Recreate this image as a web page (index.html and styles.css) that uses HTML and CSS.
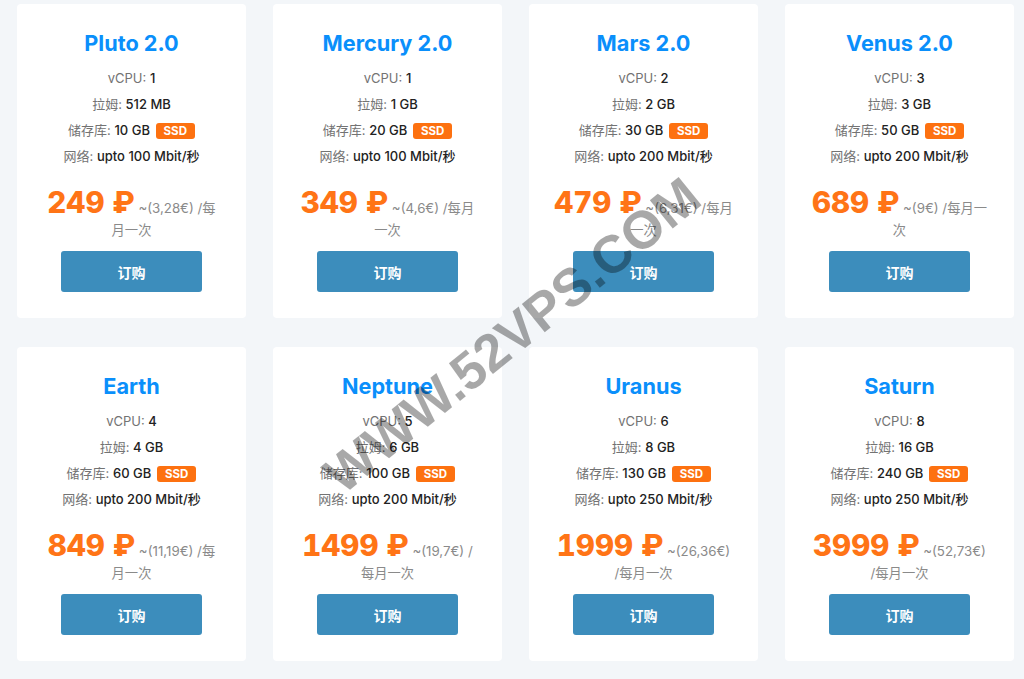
FILE: index.html
```html
<!DOCTYPE html>
<html lang="zh">
<head>
<meta charset="utf-8">
<title>VPS Plans</title>
<link rel="stylesheet" href="styles.css">
</head>
<body>
<main class="plans">
  <section class="card">
    <h2 class="title">Pluto 2.0</h2>
    <ul class="specs">
      <li><span class="lbl">vCPU:</span> <span class="val">1</span></li>
      <li><span class="lbl">拉姆:</span> <span class="val">512 MB</span></li>
      <li><span class="lbl">储存库:</span> <span class="val">10 GB</span> <span class="badge">SSD</span></li>
      <li><span class="lbl">网络:</span> <span class="val">upto 100 Mbit/秒</span></li>
    </ul>
    <p class="price"><span class="amount">249 ₽</span> <span class="unit">~(3,28€) /每月一次</span></p>
    <button class="buy">订购</button>
  </section>
  <section class="card">
    <h2 class="title">Mercury 2.0</h2>
    <ul class="specs">
      <li><span class="lbl">vCPU:</span> <span class="val">1</span></li>
      <li><span class="lbl">拉姆:</span> <span class="val">1 GB</span></li>
      <li><span class="lbl">储存库:</span> <span class="val">20 GB</span> <span class="badge">SSD</span></li>
      <li><span class="lbl">网络:</span> <span class="val">upto 100 Mbit/秒</span></li>
    </ul>
    <p class="price"><span class="amount">349 ₽</span> <span class="unit">~(4,6€) /每月一次</span></p>
    <button class="buy">订购</button>
  </section>
  <section class="card">
    <h2 class="title">Mars 2.0</h2>
    <ul class="specs">
      <li><span class="lbl">vCPU:</span> <span class="val">2</span></li>
      <li><span class="lbl">拉姆:</span> <span class="val">2 GB</span></li>
      <li><span class="lbl">储存库:</span> <span class="val">30 GB</span> <span class="badge">SSD</span></li>
      <li><span class="lbl">网络:</span> <span class="val">upto 200 Mbit/秒</span></li>
    </ul>
    <p class="price"><span class="amount">479 ₽</span> <span class="unit">~(6,31€) /每月一次</span></p>
    <button class="buy">订购</button>
  </section>
  <section class="card">
    <h2 class="title">Venus 2.0</h2>
    <ul class="specs">
      <li><span class="lbl">vCPU:</span> <span class="val">3</span></li>
      <li><span class="lbl">拉姆:</span> <span class="val">3 GB</span></li>
      <li><span class="lbl">储存库:</span> <span class="val">50 GB</span> <span class="badge">SSD</span></li>
      <li><span class="lbl">网络:</span> <span class="val">upto 200 Mbit/秒</span></li>
    </ul>
    <p class="price"><span class="amount">689 ₽</span> <span class="unit">~(9€) /每月一次</span></p>
    <button class="buy">订购</button>
  </section>
  <section class="card">
    <h2 class="title">Earth</h2>
    <ul class="specs">
      <li><span class="lbl">vCPU:</span> <span class="val">4</span></li>
      <li><span class="lbl">拉姆:</span> <span class="val">4 GB</span></li>
      <li><span class="lbl">储存库:</span> <span class="val">60 GB</span> <span class="badge">SSD</span></li>
      <li><span class="lbl">网络:</span> <span class="val">upto 200 Mbit/秒</span></li>
    </ul>
    <p class="price"><span class="amount">849 ₽</span> <span class="unit">~(11,19€) /每月一次</span></p>
    <button class="buy">订购</button>
  </section>
  <section class="card">
    <h2 class="title">Neptune</h2>
    <ul class="specs">
      <li><span class="lbl">vCPU:</span> <span class="val">5</span></li>
      <li><span class="lbl">拉姆:</span> <span class="val">6 GB</span></li>
      <li><span class="lbl">储存库:</span> <span class="val">100 GB</span> <span class="badge">SSD</span></li>
      <li><span class="lbl">网络:</span> <span class="val">upto 200 Mbit/秒</span></li>
    </ul>
    <p class="price"><span class="amount">1499 ₽</span> <span class="unit">~(19,7€) /每月一次</span></p>
    <button class="buy">订购</button>
  </section>
  <section class="card">
    <h2 class="title">Uranus</h2>
    <ul class="specs">
      <li><span class="lbl">vCPU:</span> <span class="val">6</span></li>
      <li><span class="lbl">拉姆:</span> <span class="val">8 GB</span></li>
      <li><span class="lbl">储存库:</span> <span class="val">130 GB</span> <span class="badge">SSD</span></li>
      <li><span class="lbl">网络:</span> <span class="val">upto 250 Mbit/秒</span></li>
    </ul>
    <p class="price"><span class="amount">1999 ₽</span> <span class="unit">~(26,36€) /每月一次</span></p>
    <button class="buy">订购</button>
  </section>
  <section class="card">
    <h2 class="title">Saturn</h2>
    <ul class="specs">
      <li><span class="lbl">vCPU:</span> <span class="val">8</span></li>
      <li><span class="lbl">拉姆:</span> <span class="val">16 GB</span></li>
      <li><span class="lbl">储存库:</span> <span class="val">240 GB</span> <span class="badge">SSD</span></li>
      <li><span class="lbl">网络:</span> <span class="val">upto 250 Mbit/秒</span></li>
    </ul>
    <p class="price"><span class="amount">3999 ₽</span> <span class="unit">~(52,73€) /每月一次</span></p>
    <button class="buy">订购</button>
  </section>
</main>
<div class="watermark">WWW.52VPS.COM</div>
</body>
</html>
```
FILE: styles.css
```css
html, body {
  margin: 0;
  padding: 0;
}
body {
  background: #f3f6f9;
  font-family: Inter, "Noto Sans CJK SC", sans-serif;
  color: #222;
  width: 1024px;
  height: 679px;
  overflow: hidden;
  position: relative;
}
.plans {
  display: grid;
  grid-template-columns: repeat(4, 229px);
  column-gap: 27px;
  row-gap: 29px;
  padding: 4px 0 0 17px;
}
.card {
  background: #fff;
  border-radius: 4px;
  padding: 25px 25px 26px;
  text-align: center;
  display: flex;
  flex-direction: column;
  align-items: center;
}
.title {
  margin: 0;
  font-size: 21.7px;
  line-height: 28px;
  font-weight: 700;
  color: #0a8ffb;
}
.specs {
  list-style: none;
  margin: 8px 0 0;
  padding: 0;
  font-size: 13px;
  line-height: 26px;
}
.lbl {
  color: #737373;
}
.val {
  color: #222;
  font-weight: 500;
}
.badge {
  display: inline-block;
  background: #fd7110;
  color: #fff;
  font-size: 11.5px;
  font-weight: 700;
  line-height: 16px;
  padding: 0 8px;
  border-radius: 3px;
  margin-left: 2px;
  vertical-align: 0;
}
.price {
  margin: 22px 0 0;
  font-size: 13px;
  line-height: 22px;
  width: 100%;
}
.amount {
  color: #ff7416;
  font-size: 29.5px;
  font-weight: 800;
  line-height: 22px;
  font-variant-numeric: tabular-nums;
}
.unit {
  color: #8a8a8a;
  font-size: 13.3px;
}
.buy {
  margin-top: 10px;
  width: 141px;
  height: 41px;
  border: none;
  border-radius: 3px;
  background: #3c8dbc;
  color: #fff;
  font-family: "Noto Sans CJK SC", sans-serif;
  font-size: 14px;
  font-weight: 700;
  cursor: pointer;
}
.watermark {
  position: absolute;
  left: 512px;
  top: 335px;
  transform: translate(-50%, -50%) rotate(-39deg);
  font-family: "Liberation Sans", Arial, sans-serif;
  font-weight: 700;
  font-size: 53px;
  color: rgba(0, 0, 0, 0.34);
  white-space: nowrap;
  pointer-events: none;
}
```
